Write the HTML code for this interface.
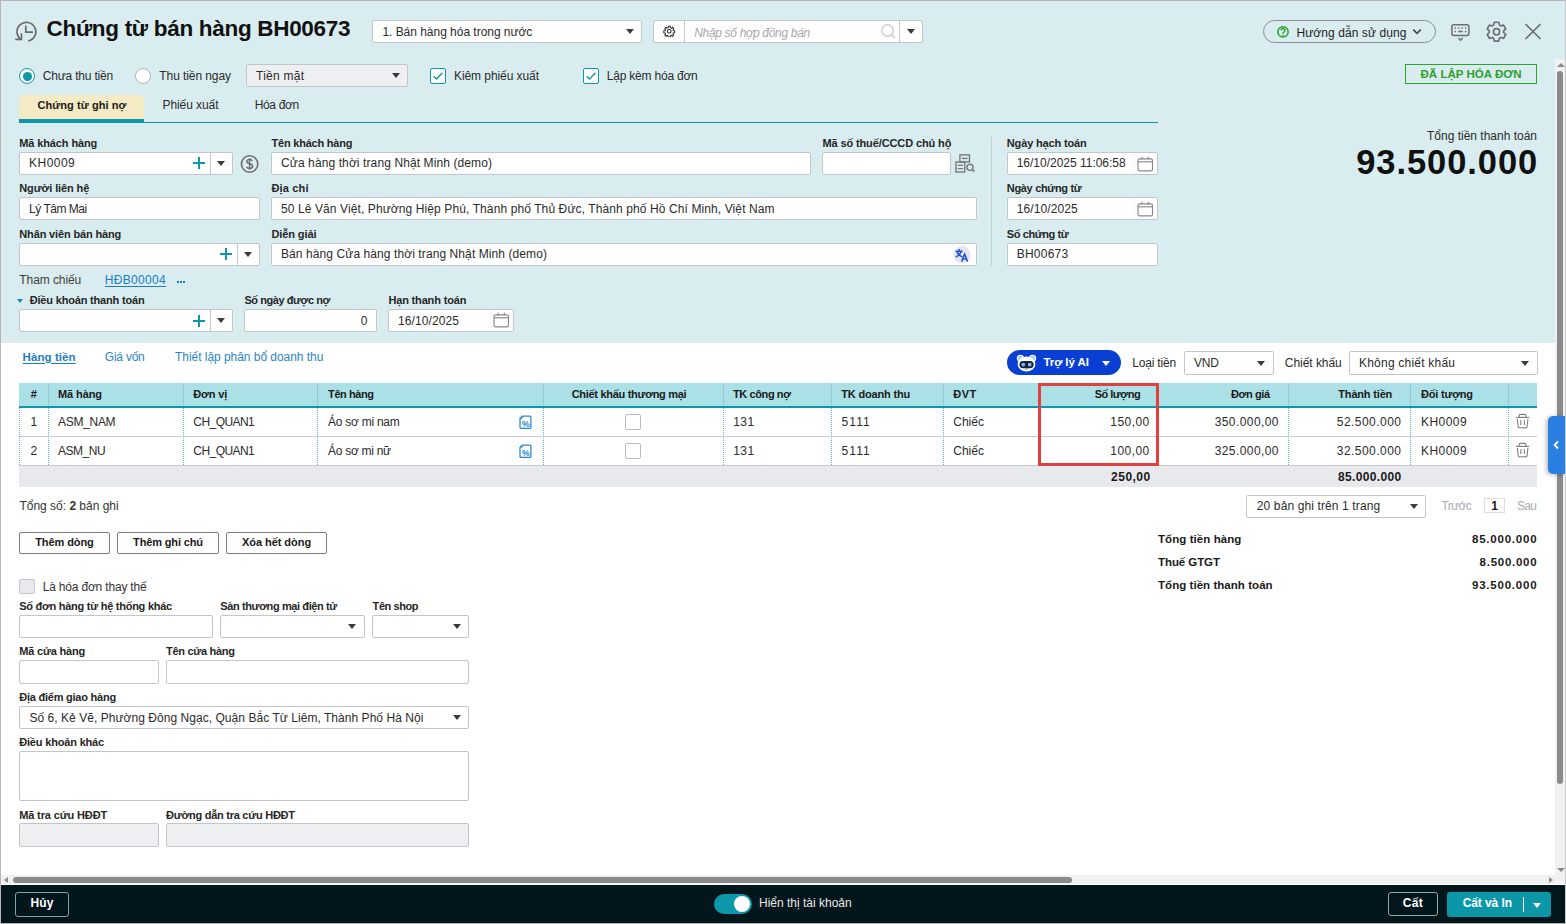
<!DOCTYPE html><html><head><meta charset="utf-8"><style>
html,body{margin:0;padding:0;width:1566px;height:924px;overflow:hidden;background:#fff;position:relative;font-family:"Liberation Sans",sans-serif}
.a{position:absolute}.t{position:absolute;white-space:nowrap;line-height:1}
</style></head><body>
<div class="a" style="left:0.0px;top:0.0px;width:1566.0px;height:343.0px;background:#d9edf0"></div>
<svg class="a" style="left:12px;top:18px" width="30" height="28" viewBox="0 0 30 28">
<path d="M9.5 21.8 A9.4 9.4 0 1 1 16.2 23.0" fill="none" stroke="#6a6a6e" stroke-width="1.7"/>
<path d="M13.8 7.4 V14.2 H21" fill="none" stroke="#6a6a6e" stroke-width="1.7"/>
<path d="M3.2 21.4 H9.4 V15.3" fill="none" stroke="#6a6a6e" stroke-width="1.7"/>
</svg>
<div class="t" style="top:17.5px;font-size:22.5px;color:#111;font-weight:700;letter-spacing:-0.307px;left:46.5px;">Chứng từ bán hàng BH00673</div>
<div class="a" style="left:372.0px;top:20.0px;width:270.0px;height:23.0px;background:#fff;border:1px solid #c2c6cc;border-radius:2px;box-sizing:border-box"></div>
<div class="t" style="top:26.3px;font-size:12px;color:#2b2b2b;letter-spacing:-0.028px;left:382.4px;">1. Bán hàng hóa trong nước</div>
<div style="position:absolute;left:626.0px;top:29.0px;width:0;height:0;border-left:4.5px solid transparent;border-right:4.5px solid transparent;border-top:5px solid #3a3a3a"></div>
<div class="a" style="left:653.0px;top:20.0px;width:270.0px;height:23.0px;background:#fff;border:1px solid #c2c6cc;border-radius:2px;box-sizing:border-box"></div>
<div class="a" style="left:684.0px;top:20.0px;width:1.0px;height:23.0px;background:#c3c7cc"></div>
<div class="a" style="left:899.0px;top:20.0px;width:1.0px;height:23.0px;background:#c3c7cc"></div>
<svg class="a" style="left:663px;top:24.6px" width="12.5" height="12.5" viewBox="0 0 24 24"><path fill="none" stroke="#2a2a2a" stroke-width="2" d="M12 8.5a3.5 3.5 0 1 0 0 7 3.5 3.5 0 0 0 0-7z"/><path fill="none" stroke="#2a2a2a" stroke-width="2" d="M10.3 2.5h3.4l.5 2.6 1.8.8 2.2-1.5 2.4 2.4-1.5 2.2.8 1.8 2.6.5v3.4l-2.6.5-.8 1.8 1.5 2.2-2.4 2.4-2.2-1.5-1.8.8-.5 2.6h-3.4l-.5-2.6-1.8-.8-2.2 1.5-2.4-2.4 1.5-2.2-.8-1.8-2.6-.5v-3.4l2.6-.5.8-1.8-1.5-2.2 2.4-2.4 2.2 1.5 1.8-.8z"/></svg>
<div class="t" style="top:26.9px;font-size:12px;color:#a3a8ae;font-style:italic;letter-spacing:-0.317px;left:694.2px;">Nhập số hợp đồng bán</div>
<svg class="a" style="left:880px;top:23px" width="17" height="17" viewBox="0 0 17 17"><circle cx="7.5" cy="7.5" r="5.8" fill="none" stroke="#c9cdd2" stroke-width="1.4"/><line x1="11.6" y1="11.6" x2="15" y2="15" stroke="#c9cdd2" stroke-width="1.6"/></svg>
<div style="position:absolute;left:906.5px;top:29.0px;width:0;height:0;border-left:4.5px solid transparent;border-right:4.5px solid transparent;border-top:5px solid #3a3a3a"></div>
<div class="a" style="left:1263.0px;top:20.0px;width:173.0px;height:23.0px;border:1px solid #8c8f92;border-radius:12px;box-sizing:border-box"></div>
<svg class="a" style="left:1275.5px;top:25px" width="14" height="14" viewBox="0 0 14 14"><circle cx="7" cy="6.9" r="5.2" fill="none" stroke="#2ea02e" stroke-width="1.5"/><path d="M5.1 5.4a1.9 1.9 0 1 1 2.7 1.7c-.6.3-.8.6-.8 1.2v.4" fill="none" stroke="#2ea02e" stroke-width="1.4"/><circle cx="7" cy="10.3" r=".8" fill="#2ea02e"/></svg>
<div class="t" style="top:26.9px;font-size:12px;color:#1e1e24;letter-spacing:0.083px;left:1296.4px;">Hướng dẫn sử dụng</div>
<svg class="a" style="left:1411.5px;top:28px" width="11" height="8" viewBox="0 0 11 8"><path d="M1.2 1.6 L5.0 5.4 L8.8 1.6" fill="none" stroke="#4a4a4e" stroke-width="1.7"/></svg>
<svg class="a" style="left:1450px;top:23px" width="21" height="19" viewBox="0 0 21 19"><rect x="1.9" y="1.8" width="17" height="10.6" rx="1.8" fill="none" stroke="#6e6e72" stroke-width="1.5"/><g fill="#6e6e72"><rect x="4.4" y="4.3" width="1.5" height="1.5" rx=".4"/><rect x="7.9" y="4.3" width="1.5" height="1.5" rx=".4"/><rect x="11.4" y="4.3" width="1.5" height="1.5" rx=".4"/><rect x="14.9" y="4.3" width="1.5" height="1.5" rx=".4"/><rect x="4.4" y="7.8" width="1.5" height="1.5" rx=".4"/><rect x="8.2" y="7.8" width="4.6" height="1.5" rx=".6"/><rect x="14.9" y="7.8" width="1.5" height="1.5" rx=".4"/></g><path d="M8.4 15.1 L10.5 17.2 L12.6 15.1" fill="none" stroke="#6e6e72" stroke-width="1.4"/></svg>
<svg class="a" style="left:1486px;top:20.8px" width="21" height="22" viewBox="0 0 21 22"><path d="M7.57 4.12 L8.32 1.25 L12.68 1.25 L13.43 4.12 L14.73 4.88 L17.59 4.08 L19.78 7.86 L17.66 9.95 L17.66 11.45 L19.78 13.54 L17.59 17.32 L14.73 16.52 L13.43 17.28 L12.68 20.15 L8.32 20.15 L7.57 17.28 L6.27 16.52 L3.41 17.32 L1.22 13.54 L3.34 11.45 L3.34 9.95 L1.22 7.86 L3.41 4.08 L6.27 4.88 Z" fill="none" stroke="#6e6e72" stroke-width="1.7" stroke-linejoin="round"/><circle cx="10.5" cy="10.7" r="3.1" fill="none" stroke="#6e6e72" stroke-width="1.7"/></svg>
<svg class="a" style="left:1523.6px;top:23px" width="18" height="17" viewBox="0 0 18 17"><path d="M1.5 1 L16.5 16 M16.5 1 L1.5 16" stroke="#6e6e72" stroke-width="1.7"/></svg>
<div class="a" style="left:19.0px;top:68.0px;width:16.0px;height:16.0px;border:1.5px solid #0e97a8;border-radius:50%;background:#fff;box-sizing:border-box"></div>
<div class="a" style="left:22.5px;top:71.5px;width:9.0px;height:9.0px;border-radius:50%;background:#0e97a8"></div>
<div class="t" style="top:70.3px;font-size:12px;color:#2b2b2b;letter-spacing:-0.188px;left:42.7px;">Chưa thu tiền</div>
<div class="a" style="left:135.0px;top:68.0px;width:16.0px;height:16.0px;border:1px solid #b3b3b3;border-radius:50%;background:#fff;box-sizing:border-box"></div>
<div class="t" style="top:70.3px;font-size:12px;color:#2b2b2b;letter-spacing:-0.085px;left:159.3px;">Thu tiền ngay</div>
<div class="a" style="left:246.0px;top:64.0px;width:162.0px;height:23.0px;background:#eeeff1;border:1px solid #c2c6cc;border-radius:2px;box-sizing:border-box"></div>
<div class="t" style="top:70.3px;font-size:12px;color:#2b2b2b;letter-spacing:0.250px;left:256.0px;">Tiền mặt</div>
<div style="position:absolute;left:391.5px;top:72.5px;width:0;height:0;border-left:4.5px solid transparent;border-right:4.5px solid transparent;border-top:5px solid #3a3a3a"></div>
<div class="a" style="left:430.0px;top:68.0px;width:16.0px;height:16.0px;border:1.5px solid #0e97a8;border-radius:2px;background:#fff;box-sizing:border-box"></div>
<svg class="a" style="left:430px;top:68px" width="16" height="16" viewBox="0 0 16 16"><path d="M3.6 8.2 L6.6 11 L12.4 4.8" fill="none" stroke="#0e97a8" stroke-width="1.4"/></svg>
<div class="t" style="top:70.3px;font-size:12px;color:#2b2b2b;letter-spacing:-0.076px;left:454.0px;">Kiêm phiếu xuất</div>
<div class="a" style="left:583.0px;top:68.0px;width:16.0px;height:16.0px;border:1.5px solid #0e97a8;border-radius:2px;background:#fff;box-sizing:border-box"></div>
<svg class="a" style="left:583px;top:68px" width="16" height="16" viewBox="0 0 16 16"><path d="M3.6 8.2 L6.6 11 L12.4 4.8" fill="none" stroke="#0e97a8" stroke-width="1.4"/></svg>
<div class="t" style="top:70.3px;font-size:12px;color:#2b2b2b;letter-spacing:-0.210px;left:606.8px;">Lập kèm hóa đơn</div>
<div class="a" style="left:1405.0px;top:64.0px;width:132.0px;height:20.0px;border:1.6px solid #2ba52b;box-sizing:border-box"></div>
<div class="t" style="top:69.0px;font-size:11.5px;color:#2ba02b;font-weight:700;letter-spacing:0.035px;left:1171.0px;width:600px;text-align:center;">ĐÃ LẬP HÓA ĐƠN</div>
<div class="a" style="left:19.0px;top:95.0px;width:125.0px;height:24.0px;background:#f4eac3;border-radius:5px 5px 0 0"></div>
<div class="a" style="left:19.0px;top:119.0px;width:125.0px;height:4.0px;background:#0e97a8"></div>
<div class="a" style="left:144.0px;top:122.0px;width:1013.5px;height:1.0px;background:#0e97a8"></div>
<div class="t" style="top:99.9px;font-size:11px;color:#1a1a1a;font-weight:700;letter-spacing:0.078px;left:37.4px;">Chứng từ ghi nợ</div>
<div class="t" style="top:99.1px;font-size:12px;color:#2b2b2b;letter-spacing:-0.080px;left:162.5px;">Phiếu xuất</div>
<div class="t" style="top:99.1px;font-size:12px;color:#2b2b2b;letter-spacing:-0.346px;left:254.7px;">Hóa đơn</div>
<div class="t" style="top:138.4px;font-size:11px;color:#262626;font-weight:700;letter-spacing:-0.122px;left:19.3px;">Mã khách hàng</div>
<div class="t" style="top:138.4px;font-size:11px;color:#262626;font-weight:700;letter-spacing:-0.212px;left:271.5px;">Tên khách hàng</div>
<div class="t" style="top:138.4px;font-size:11px;color:#262626;font-weight:700;letter-spacing:-0.114px;left:822.4px;">Mã số thuế/CCCD chủ hộ</div>
<div class="t" style="top:138.4px;font-size:11px;color:#262626;font-weight:700;letter-spacing:-0.147px;left:1006.8px;">Ngày hạch toán</div>
<div class="t" style="top:182.9px;font-size:11px;color:#262626;font-weight:700;letter-spacing:-0.117px;left:19.3px;">Người liên hệ</div>
<div class="t" style="top:182.9px;font-size:11px;color:#262626;font-weight:700;letter-spacing:0.154px;left:271.5px;">Địa chỉ</div>
<div class="t" style="top:182.9px;font-size:11px;color:#262626;font-weight:700;letter-spacing:-0.324px;left:1006.8px;">Ngày chứng từ</div>
<div class="t" style="top:229.1px;font-size:11px;color:#262626;font-weight:700;letter-spacing:-0.148px;left:19.3px;">Nhân viên bán hàng</div>
<div class="t" style="top:229.1px;font-size:11px;color:#262626;font-weight:700;letter-spacing:-0.105px;left:271.5px;">Diễn giải</div>
<div class="t" style="top:229.1px;font-size:11px;color:#262626;font-weight:700;letter-spacing:-0.405px;left:1006.8px;">Số chứng từ</div>
<div class="a" style="left:19.0px;top:152.0px;width:214.0px;height:23.0px;background:#fff;border:1px solid #c2c6cc;border-radius:2px;box-sizing:border-box"></div>
<div class="a" style="left:210.0px;top:152.0px;width:1.0px;height:23.0px;background:#c3c7cc"></div>
<div class="a" style="left:193.0px;top:162.3px;width:12.0px;height:2.0px;background:#0e97a8"></div>
<div class="a" style="left:198.0px;top:157.3px;width:2.0px;height:12.0px;background:#0e97a8"></div>
<div style="position:absolute;left:217.0px;top:161.0px;width:0;height:0;border-left:4.5px solid transparent;border-right:4.5px solid transparent;border-top:5px solid #3a3a3a"></div>
<div class="t" style="top:157.0px;font-size:12px;color:#2b2b2b;letter-spacing:0.445px;left:29.1px;">KH0009</div>
<svg class="a" style="left:240px;top:153.5px" width="19" height="20" viewBox="0 0 19 20"><circle cx="9.6" cy="10" r="8.2" fill="none" stroke="#6e6e72" stroke-width="1.6"/><path d="M12.4 6.9 C11.8 5.9 10.8 5.5 9.6 5.5 C7.9 5.5 6.8 6.4 6.8 7.6 C6.8 10.3 12.6 9.3 12.6 12.2 C12.6 13.5 11.4 14.4 9.6 14.4 C8.3 14.4 7.2 13.9 6.5 13" fill="none" stroke="#6e6e72" stroke-width="1.5"/><path d="M9.6 4.2 V15.8" stroke="#6e6e72" stroke-width="1.3"/></svg>
<div class="a" style="left:271.0px;top:152.0px;width:540.0px;height:23.0px;background:#fff;border:1px solid #c2c6cc;border-radius:2px;box-sizing:border-box"></div>
<div class="t" style="top:157.0px;font-size:12px;color:#2b2b2b;letter-spacing:0.104px;left:281.0px;">Cửa hàng thời trang Nhật Minh (demo)</div>
<div class="a" style="left:822.0px;top:152.0px;width:129.0px;height:23.0px;background:#fff;border:1px solid #c2c6cc;border-radius:2px;box-sizing:border-box"></div>
<svg class="a" style="left:955px;top:153px" width="21" height="21" viewBox="0 0 21 21"><g fill="none" stroke="#75797e" stroke-width="1.4"><rect x="4.9" y="1.9" width="9.6" height="7"/><path d="M6.8 5.4 H12.6"/><rect x="0.9" y="9" width="8.8" height="10"/><path d="M2.6 12.4 H8 M2.6 15.6 H8"/><circle cx="15" cy="14.3" r="3.1"/><path d="M17.2 16.5 L19.4 18.7" stroke-width="1.7"/></g></svg>
<div class="a" style="left:991.4px;top:137.0px;width:1.0px;height:129.0px;background:#c0d0d4"></div>
<div class="a" style="left:1007.0px;top:152.0px;width:151.0px;height:23.0px;background:#fff;border:1px solid #c2c6cc;border-radius:2px;box-sizing:border-box"></div>
<div class="a" style="left:1134.0px;top:153.3px;width:1.0px;height:20.2px;background:#f6f7f8"></div>
<svg style="position:absolute;left:1137px;top:155.5px" width="17" height="17" viewBox="0 0 17 17"><rect x="1" y="2.9" width="14.5" height="12" rx="1.7" fill="none" stroke="#85898f" stroke-width="1.15"/><line x1="1" y1="5.8" x2="15.5" y2="5.8" stroke="#85898f" stroke-width="1.15"/><line x1="5" y1="0.8" x2="5" y2="3.6" stroke="#85898f" stroke-width="1.1"/><line x1="11.3" y1="0.8" x2="11.3" y2="3.6" stroke="#85898f" stroke-width="1.1"/></svg>
<div class="t" style="top:157.0px;font-size:12px;color:#2b2b2b;letter-spacing:-0.012px;left:1016.7px;">16/10/2025 11:06:58</div>
<div class="a" style="left:1007.0px;top:197.0px;width:151.0px;height:23.0px;background:#fff;border:1px solid #c2c6cc;border-radius:2px;box-sizing:border-box"></div>
<div class="a" style="left:1134.0px;top:198.3px;width:1.0px;height:20.2px;background:#f6f7f8"></div>
<svg style="position:absolute;left:1137px;top:200.5px" width="17" height="17" viewBox="0 0 17 17"><rect x="1" y="2.9" width="14.5" height="12" rx="1.7" fill="none" stroke="#85898f" stroke-width="1.15"/><line x1="1" y1="5.8" x2="15.5" y2="5.8" stroke="#85898f" stroke-width="1.15"/><line x1="5" y1="0.8" x2="5" y2="3.6" stroke="#85898f" stroke-width="1.1"/><line x1="11.3" y1="0.8" x2="11.3" y2="3.6" stroke="#85898f" stroke-width="1.1"/></svg>
<div class="t" style="top:203.3px;font-size:12px;color:#2b2b2b;letter-spacing:0.104px;left:1016.7px;">16/10/2025</div>
<div class="a" style="left:19.0px;top:197.0px;width:241.0px;height:23.0px;background:#fff;border:1px solid #c2c6cc;border-radius:2px;box-sizing:border-box"></div>
<div class="t" style="top:203.3px;font-size:12px;color:#2b2b2b;letter-spacing:-0.497px;left:29.1px;">Lý Tâm Mai</div>
<div class="a" style="left:271.0px;top:197.0px;width:706.0px;height:23.0px;background:#fff;border:1px solid #c2c6cc;border-radius:2px;box-sizing:border-box"></div>
<div class="t" style="top:203.3px;font-size:12px;color:#2b2b2b;letter-spacing:0.103px;left:281.0px;">50 Lê Văn Việt, Phường Hiệp Phú, Thành phố Thủ Đức, Thành phố Hồ Chí Minh, Việt Nam</div>
<div class="a" style="left:19.0px;top:243.0px;width:241.0px;height:23.0px;background:#fff;border:1px solid #c2c6cc;border-radius:2px;box-sizing:border-box"></div>
<div class="a" style="left:237.0px;top:243.0px;width:1.0px;height:23.0px;background:#c3c7cc"></div>
<div class="a" style="left:220.0px;top:252.8px;width:12.0px;height:2.0px;background:#0e97a8"></div>
<div class="a" style="left:225.0px;top:247.8px;width:2.0px;height:12.0px;background:#0e97a8"></div>
<div style="position:absolute;left:244.0px;top:251.5px;width:0;height:0;border-left:4.5px solid transparent;border-right:4.5px solid transparent;border-top:5px solid #3a3a3a"></div>
<div class="a" style="left:271.0px;top:243.0px;width:706.0px;height:23.0px;background:#fff;border:1px solid #c2c6cc;border-radius:2px;box-sizing:border-box"></div>
<div class="t" style="top:247.8px;font-size:12px;color:#2b2b2b;letter-spacing:0.089px;left:281.0px;">Bán hàng Cửa hàng thời trang Nhật Minh (demo)</div>
<svg class="a" style="left:953px;top:246px" width="18" height="18" viewBox="0 0 18 18"><circle cx="9" cy="8.6" r="8.6" fill="#e4e8ee"/><g fill="none" stroke="#1d4fd6" stroke-width="1.5"><path d="M2.6 5.2 H9.6 M6.1 3 V5.2"/><path d="M3.8 5.6 Q5.6 9.6 9.4 11"/><path d="M8.2 5.6 Q6.8 9.4 2.8 11"/><path d="M8.6 15.6 L11.6 8 L14.6 15.6 M9.7 12.9 H13.5"/></g></svg>
<div class="a" style="left:1007.0px;top:243.0px;width:151.0px;height:23.0px;background:#fff;border:1px solid #c2c6cc;border-radius:2px;box-sizing:border-box"></div>
<div class="t" style="top:247.8px;font-size:12px;color:#2b2b2b;letter-spacing:0.242px;left:1016.7px;">BH00673</div>
<div class="t" style="top:274.1px;font-size:12px;color:#3c3c3c;letter-spacing:-0.078px;left:19.3px;">Tham chiếu</div>
<div class="t" style="top:274.1px;font-size:12px;color:#1b7dc4;letter-spacing:0.326px;left:104.8px;text-decoration:underline;text-underline-offset:1.5px">HĐB00004</div>
<div class="a" style="left:177.3px;top:281.3px;width:1.8px;height:1.8px;background:#1b7dc4"></div>
<div class="a" style="left:180.2px;top:281.3px;width:1.8px;height:1.8px;background:#1b7dc4"></div>
<div class="a" style="left:183.1px;top:281.3px;width:1.8px;height:1.8px;background:#1b7dc4"></div>
<div style="position:absolute;left:17.1px;top:299.0px;width:0;height:0;border-left:3.5px solid transparent;border-right:3.5px solid transparent;border-top:4px solid #1b7dc4"></div>
<div class="t" style="top:294.9px;font-size:11px;color:#262626;font-weight:700;letter-spacing:-0.178px;left:29.7px;">Điều khoản thanh toán</div>
<div class="t" style="top:294.9px;font-size:11px;color:#262626;font-weight:700;letter-spacing:-0.433px;left:244.4px;">Số ngày được nợ</div>
<div class="t" style="top:294.9px;font-size:11px;color:#262626;font-weight:700;letter-spacing:-0.159px;left:388.4px;">Hạn thanh toán</div>
<div class="a" style="left:19.0px;top:309.0px;width:214.0px;height:23.0px;background:#fff;border:1px solid #c2c6cc;border-radius:2px;box-sizing:border-box"></div>
<div class="a" style="left:210.0px;top:309.0px;width:1.0px;height:23.0px;background:#c3c7cc"></div>
<div class="a" style="left:193.0px;top:319.5px;width:12.0px;height:2.0px;background:#0e97a8"></div>
<div class="a" style="left:198.0px;top:314.5px;width:2.0px;height:12.0px;background:#0e97a8"></div>
<div style="position:absolute;left:217.0px;top:318.3px;width:0;height:0;border-left:4.5px solid transparent;border-right:4.5px solid transparent;border-top:5px solid #3a3a3a"></div>
<div class="a" style="left:244.0px;top:309.0px;width:133.0px;height:23.0px;background:#fff;border:1px solid #c2c6cc;border-radius:2px;box-sizing:border-box"></div>
<div class="t" style="top:314.8px;font-size:12px;color:#2b2b2b;right:1198.7px;">0</div>
<div class="a" style="left:388.0px;top:309.0px;width:126.0px;height:23.0px;background:#fff;border:1px solid #c2c6cc;border-radius:2px;box-sizing:border-box"></div>
<div class="a" style="left:490.0px;top:310.3px;width:1.0px;height:20.2px;background:#f6f7f8"></div>
<svg style="position:absolute;left:492.5px;top:312.4px" width="17" height="17" viewBox="0 0 17 17"><rect x="1" y="2.9" width="14.5" height="12" rx="1.7" fill="none" stroke="#85898f" stroke-width="1.15"/><line x1="1" y1="5.8" x2="15.5" y2="5.8" stroke="#85898f" stroke-width="1.15"/><line x1="5" y1="0.8" x2="5" y2="3.6" stroke="#85898f" stroke-width="1.1"/><line x1="11.3" y1="0.8" x2="11.3" y2="3.6" stroke="#85898f" stroke-width="1.1"/></svg>
<div class="t" style="top:314.8px;font-size:12px;color:#2b2b2b;letter-spacing:0.104px;left:398.0px;">16/10/2025</div>
<div class="t" style="top:130.1px;font-size:12px;color:#2a2a2a;letter-spacing:-0.005px;right:29.0px;margin-right:0.005px;">Tổng tiền thanh toán</div>
<div class="t" style="top:144.7px;font-size:34.5px;color:#111;font-weight:700;letter-spacing:0.925px;right:28.8px;margin-right:-0.925px;">93.500.000</div>
<div class="t" style="top:351.6px;font-size:11.5px;color:#1b7dc4;font-weight:700;letter-spacing:0.076px;left:22.6px;text-decoration:underline;text-underline-offset:1.5px">Hàng tiền</div>
<div class="t" style="top:351.1px;font-size:12px;color:#2b86c8;letter-spacing:-0.227px;left:104.8px;">Giá vốn</div>
<div class="t" style="top:351.1px;font-size:12px;color:#2b86c8;letter-spacing:-0.041px;left:175.0px;">Thiết lập phân bổ doanh thu</div>
<div class="a" style="left:1007.0px;top:350.0px;width:114.0px;height:25.0px;background:#0a3fd4;border-radius:13px"></div>
<svg class="a" style="left:1016px;top:352px" width="21" height="21" viewBox="0 0 21 21"><circle cx="4.4" cy="6.3" r="3.1" fill="#9fd0f7" stroke="#fff" stroke-width="1.1"/><circle cx="16.6" cy="6.3" r="3.1" fill="#9fd0f7" stroke="#fff" stroke-width="1.1"/><ellipse cx="10.5" cy="12" rx="8.9" ry="7.4" fill="#fff"/><rect x="3.4" y="9" width="14.2" height="7.2" rx="3.6" fill="#16213a"/><circle cx="7.3" cy="12.6" r="1.9" fill="#79bdf2"/><circle cx="13.7" cy="12.6" r="1.9" fill="#79bdf2"/><rect x="9.3" y="16.2" width="2.4" height="1.5" fill="#8a8f98"/></svg>
<div class="t" style="top:356.8px;font-size:11.5px;color:#fff;font-weight:700;letter-spacing:-0.064px;left:1043.4px;">Trợ lý AI</div>
<div style="position:absolute;left:1101.5px;top:360.8px;width:0;height:0;border-left:4.0px solid transparent;border-right:4.0px solid transparent;border-top:5px solid #fff"></div>
<div class="t" style="top:357.3px;font-size:12px;color:#2a2a2a;letter-spacing:-0.172px;left:1132.2px;">Loại tiền</div>
<div class="a" style="left:1184.0px;top:351.0px;width:90.0px;height:24.0px;background:#fff;border:1px solid #c2c6cc;border-radius:2px;box-sizing:border-box"></div>
<div class="t" style="top:357.3px;font-size:12px;color:#2b2b2b;letter-spacing:-0.172px;left:1194.0px;">VND</div>
<div style="position:absolute;left:1257.0px;top:360.5px;width:0;height:0;border-left:4.5px solid transparent;border-right:4.5px solid transparent;border-top:5px solid #3a3a3a"></div>
<div class="t" style="top:357.3px;font-size:12px;color:#2a2a2a;letter-spacing:-0.042px;left:1284.8px;">Chiết khấu</div>
<div class="a" style="left:1349.0px;top:351.0px;width:189.0px;height:24.0px;background:#fff;border:1px solid #c2c6cc;border-radius:2px;box-sizing:border-box"></div>
<div class="t" style="top:357.3px;font-size:12px;color:#2b2b2b;letter-spacing:0.217px;left:1359.0px;">Không chiết khấu</div>
<div style="position:absolute;left:1521.0px;top:360.5px;width:0;height:0;border-left:4.5px solid transparent;border-right:4.5px solid transparent;border-top:5px solid #3a3a3a"></div>
<div class="a" style="left:19.0px;top:383.0px;width:1518.0px;height:24.0px;background:#abe1e6"></div>
<div class="a" style="left:19.0px;top:406.0px;width:1518.0px;height:2.0px;background:#0e97a8"></div>
<div class="a" style="left:19.0px;top:408.0px;width:1518.0px;height:57.0px;background:#fff"></div>
<div class="a" style="left:19.0px;top:436.0px;width:1518.0px;height:1.0px;background:#c8cacc"></div>
<div class="a" style="left:19.0px;top:465.0px;width:1518.0px;height:1.0px;background:#c8cbce"></div>
<div class="a" style="left:19.0px;top:466.0px;width:1518.0px;height:21.0px;background:#e8e9ed"></div>
<div class="a" style="left:19.0px;top:408.0px;width:0.0px;height:57.0px;border-left:1px dotted #5fb8c4"></div>
<div class="a" style="left:48.0px;top:383.0px;width:1.0px;height:23.0px;background:#8fcdd3"></div>
<div class="a" style="left:48.0px;top:408.0px;width:0.0px;height:57.0px;border-left:1px dotted #5fb8c4"></div>
<div class="a" style="left:183.0px;top:383.0px;width:1.0px;height:23.0px;background:#8fcdd3"></div>
<div class="a" style="left:183.0px;top:408.0px;width:0.0px;height:57.0px;border-left:1px dotted #5fb8c4"></div>
<div class="a" style="left:317.0px;top:383.0px;width:1.0px;height:23.0px;background:#8fcdd3"></div>
<div class="a" style="left:317.0px;top:408.0px;width:0.0px;height:57.0px;border-left:1px dotted #5fb8c4"></div>
<div class="a" style="left:543.0px;top:383.0px;width:1.0px;height:23.0px;background:#8fcdd3"></div>
<div class="a" style="left:543.0px;top:408.0px;width:0.0px;height:57.0px;border-left:1px dotted #5fb8c4"></div>
<div class="a" style="left:723.0px;top:383.0px;width:1.0px;height:23.0px;background:#8fcdd3"></div>
<div class="a" style="left:723.0px;top:408.0px;width:0.0px;height:57.0px;border-left:1px dotted #5fb8c4"></div>
<div class="a" style="left:831.0px;top:383.0px;width:1.0px;height:23.0px;background:#8fcdd3"></div>
<div class="a" style="left:831.0px;top:408.0px;width:0.0px;height:57.0px;border-left:1px dotted #5fb8c4"></div>
<div class="a" style="left:943.0px;top:383.0px;width:1.0px;height:23.0px;background:#8fcdd3"></div>
<div class="a" style="left:943.0px;top:408.0px;width:0.0px;height:57.0px;border-left:1px dotted #5fb8c4"></div>
<div class="a" style="left:1038.0px;top:383.0px;width:1.0px;height:23.0px;background:#8fcdd3"></div>
<div class="a" style="left:1038.0px;top:408.0px;width:0.0px;height:57.0px;border-left:1px dotted #5fb8c4"></div>
<div class="a" style="left:1158.0px;top:383.0px;width:1.0px;height:23.0px;background:#8fcdd3"></div>
<div class="a" style="left:1158.0px;top:408.0px;width:0.0px;height:57.0px;border-left:1px dotted #5fb8c4"></div>
<div class="a" style="left:1288.0px;top:383.0px;width:1.0px;height:23.0px;background:#8fcdd3"></div>
<div class="a" style="left:1288.0px;top:408.0px;width:0.0px;height:57.0px;border-left:1px dotted #5fb8c4"></div>
<div class="a" style="left:1410.0px;top:383.0px;width:1.0px;height:23.0px;background:#8fcdd3"></div>
<div class="a" style="left:1410.0px;top:408.0px;width:0.0px;height:57.0px;border-left:1px dotted #5fb8c4"></div>
<div class="a" style="left:1508.0px;top:383.0px;width:1.0px;height:23.0px;background:#8fcdd3"></div>
<div class="a" style="left:1508.0px;top:408.0px;width:0.0px;height:57.0px;border-left:1px dotted #5fb8c4"></div>
<div class="t" style="top:389.4px;font-size:11px;color:#1a1a1a;font-weight:700;left:-266.2px;width:600px;text-align:center;">#</div>
<div class="t" style="top:389.4px;font-size:11px;color:#1a1a1a;font-weight:700;letter-spacing:-0.104px;left:58.0px;">Mã hàng</div>
<div class="t" style="top:389.4px;font-size:11px;color:#1a1a1a;font-weight:700;letter-spacing:-0.144px;left:193.3px;">Đơn vị</div>
<div class="t" style="top:389.4px;font-size:11px;color:#1a1a1a;font-weight:700;letter-spacing:-0.413px;left:328.1px;">Tên hàng</div>
<div class="t" style="top:389.4px;font-size:11px;color:#1a1a1a;font-weight:700;letter-spacing:-0.295px;left:329.0px;width:600px;text-align:center;">Chiết khấu thương mại</div>
<div class="t" style="top:389.4px;font-size:11px;color:#1a1a1a;font-weight:700;letter-spacing:-0.399px;left:733.0px;">TK công nợ</div>
<div class="t" style="top:389.4px;font-size:11px;color:#1a1a1a;font-weight:700;letter-spacing:-0.170px;left:841.3px;">TK doanh thu</div>
<div class="t" style="top:389.4px;font-size:11px;color:#1a1a1a;font-weight:700;letter-spacing:0.500px;left:953.3px;">ĐVT</div>
<div class="t" style="top:389.4px;font-size:11px;color:#1a1a1a;font-weight:700;letter-spacing:-0.487px;right:425.4px;margin-right:0.487px;">Số lượng</div>
<div class="t" style="top:389.4px;font-size:11px;color:#1a1a1a;font-weight:700;letter-spacing:-0.406px;right:296.0px;margin-right:0.406px;">Đơn giá</div>
<div class="t" style="top:389.4px;font-size:11px;color:#1a1a1a;font-weight:700;letter-spacing:-0.179px;right:173.7px;margin-right:0.179px;">Thành tiền</div>
<div class="t" style="top:389.4px;font-size:11px;color:#1a1a1a;font-weight:700;letter-spacing:-0.209px;left:1421.0px;">Đối tượng</div>
<div class="t" style="top:416.1px;font-size:12px;color:#2b2b2b;left:-266.2px;width:600px;text-align:center;">1</div>
<div class="t" style="top:416.1px;font-size:12px;color:#2b2b2b;letter-spacing:-0.291px;left:58.0px;">ASM_NAM</div>
<div class="t" style="top:416.1px;font-size:12px;color:#2b2b2b;letter-spacing:-0.551px;left:193.3px;">CH_QUAN1</div>
<div class="t" style="top:416.1px;font-size:12px;color:#2b2b2b;letter-spacing:-0.269px;left:328.1px;">Áo sơ mi nam</div>
<svg class="a" style="left:518.5px;top:415.3px" width="13" height="14" viewBox="0 0 13 14"><path d="M3.4 1 H10.9 A1 1 0 0 1 11.9 2 V12.4 A1 1 0 0 1 10.9 13.4 H2 A1 1 0 0 1 1 12.4 V3.4 Z" fill="#fff" stroke="#2a86cf" stroke-width="1.25"/><ellipse cx="2.6" cy="2.6" rx="1.3" ry="0.9" transform="rotate(-40 2.6 2.6)" fill="none" stroke="#2a86cf" stroke-width="0.8"/><text x="6.9" y="11.6" text-anchor="middle" font-family="Liberation Sans" font-weight="700" font-size="8.6" fill="#2a86cf">%</text></svg>
<div class="a" style="left:625.0px;top:414.3px;width:16.0px;height:16.0px;border:1px solid #b9bcc0;border-radius:2px;background:#fff;box-sizing:border-box"></div>
<div class="t" style="top:416.1px;font-size:12px;color:#2b2b2b;letter-spacing:0.484px;left:733.2px;">131</div>
<div class="t" style="top:416.1px;font-size:12px;color:#2b2b2b;letter-spacing:1.093px;left:841.5px;">5111</div>
<div class="t" style="top:416.1px;font-size:12px;color:#2b2b2b;letter-spacing:-0.022px;left:953.3px;">Chiếc</div>
<div class="t" style="top:416.1px;font-size:12px;color:#2b2b2b;letter-spacing:0.459px;right:416.7px;margin-right:-0.459px;">150,00</div>
<div class="t" style="top:416.1px;font-size:12px;color:#2b2b2b;letter-spacing:0.415px;right:287.5px;margin-right:-0.415px;">350.000,00</div>
<div class="t" style="top:416.1px;font-size:12px;color:#2b2b2b;letter-spacing:0.460px;right:165.0px;margin-right:-0.460px;">52.500.000</div>
<div class="t" style="top:416.1px;font-size:12px;color:#2b2b2b;letter-spacing:0.445px;left:1421.0px;">KH0009</div>
<svg class="a" style="left:1515px;top:413px" width="16" height="16" viewBox="0 0 16 16"><g fill="none" stroke="#7f8286" stroke-width="1.15"><path d="M1 4.4 H14.2"/><path d="M4.2 4.2 V2.5 A1.2 1.2 0 0 1 5.4 1.3 H9.8 A1.2 1.2 0 0 1 11 2.5 V4.2"/><path d="M2.3 6 L3.2 14 A0.9 0.9 0 0 0 4.1 14.8 H11.1 A0.9 0.9 0 0 0 12 14 L12.9 6"/><path d="M5.8 7.2 V12 M9.4 7.2 V12"/></g></svg>
<div class="t" style="top:445.3px;font-size:12px;color:#2b2b2b;left:-266.2px;width:600px;text-align:center;">2</div>
<div class="t" style="top:445.3px;font-size:12px;color:#2b2b2b;letter-spacing:-0.483px;left:58.0px;">ASM_NU</div>
<div class="t" style="top:445.3px;font-size:12px;color:#2b2b2b;letter-spacing:-0.551px;left:193.3px;">CH_QUAN1</div>
<div class="t" style="top:445.3px;font-size:12px;color:#2b2b2b;letter-spacing:-0.292px;left:328.1px;">Áo sơ mi nữ</div>
<svg class="a" style="left:518.5px;top:444.3px" width="13" height="14" viewBox="0 0 13 14"><path d="M3.4 1 H10.9 A1 1 0 0 1 11.9 2 V12.4 A1 1 0 0 1 10.9 13.4 H2 A1 1 0 0 1 1 12.4 V3.4 Z" fill="#fff" stroke="#2a86cf" stroke-width="1.25"/><ellipse cx="2.6" cy="2.6" rx="1.3" ry="0.9" transform="rotate(-40 2.6 2.6)" fill="none" stroke="#2a86cf" stroke-width="0.8"/><text x="6.9" y="11.6" text-anchor="middle" font-family="Liberation Sans" font-weight="700" font-size="8.6" fill="#2a86cf">%</text></svg>
<div class="a" style="left:625.0px;top:443.3px;width:16.0px;height:16.0px;border:1px solid #b9bcc0;border-radius:2px;background:#fff;box-sizing:border-box"></div>
<div class="t" style="top:445.3px;font-size:12px;color:#2b2b2b;letter-spacing:0.484px;left:733.2px;">131</div>
<div class="t" style="top:445.3px;font-size:12px;color:#2b2b2b;letter-spacing:1.093px;left:841.5px;">5111</div>
<div class="t" style="top:445.3px;font-size:12px;color:#2b2b2b;letter-spacing:-0.022px;left:953.3px;">Chiếc</div>
<div class="t" style="top:445.3px;font-size:12px;color:#2b2b2b;letter-spacing:0.459px;right:416.7px;margin-right:-0.459px;">100,00</div>
<div class="t" style="top:445.3px;font-size:12px;color:#2b2b2b;letter-spacing:0.415px;right:287.5px;margin-right:-0.415px;">325.000,00</div>
<div class="t" style="top:445.3px;font-size:12px;color:#2b2b2b;letter-spacing:0.460px;right:165.0px;margin-right:-0.460px;">32.500.000</div>
<div class="t" style="top:445.3px;font-size:12px;color:#2b2b2b;letter-spacing:0.445px;left:1421.0px;">KH0009</div>
<svg class="a" style="left:1515px;top:442px" width="16" height="16" viewBox="0 0 16 16"><g fill="none" stroke="#7f8286" stroke-width="1.15"><path d="M1 4.4 H14.2"/><path d="M4.2 4.2 V2.5 A1.2 1.2 0 0 1 5.4 1.3 H9.8 A1.2 1.2 0 0 1 11 2.5 V4.2"/><path d="M2.3 6 L3.2 14 A0.9 0.9 0 0 0 4.1 14.8 H11.1 A0.9 0.9 0 0 0 12 14 L12.9 6"/><path d="M5.8 7.2 V12 M9.4 7.2 V12"/></g></svg>
<div class="t" style="top:470.9px;font-size:12px;color:#1a1a1a;font-weight:700;letter-spacing:0.479px;right:415.8px;margin-right:-0.479px;">250,00</div>
<div class="t" style="top:470.9px;font-size:12px;color:#1a1a1a;font-weight:700;letter-spacing:0.360px;right:164.7px;margin-right:-0.360px;">85.000.000</div>
<div class="a" style="left:1038.4px;top:383.4px;width:121.0px;height:83.0px;border:3px solid #e0413f;box-sizing:border-box"></div>
<div class="t" style="top:500.1px;font-size:12px;color:#333;letter-spacing:-0.018px;left:19.5px;">Tổng số: <b>2</b> bản ghi</div>
<div class="a" style="left:1246.0px;top:495.0px;width:180.0px;height:23.0px;background:#fff;border:1px solid #c2c6cc;border-radius:2px;box-sizing:border-box"></div>
<div class="t" style="top:499.8px;font-size:12px;color:#2b2b2b;letter-spacing:0.120px;left:1256.8px;">20 bản ghi trên 1 trang</div>
<div style="position:absolute;left:1409.5px;top:504.0px;width:0;height:0;border-left:4.5px solid transparent;border-right:4.5px solid transparent;border-top:5px solid #3a3a3a"></div>
<div class="t" style="top:499.8px;font-size:12px;color:#a9adb2;letter-spacing:-0.599px;left:1441.4px;">Trước</div>
<div class="a" style="left:1484.3px;top:498.3px;width:20.4px;height:15.2px;border:1px solid #dcdee0;box-sizing:border-box;background:#fff"></div>
<div class="t" style="top:499.8px;font-size:12px;color:#1a1a1a;font-weight:700;left:1194.5px;width:600px;text-align:center;">1</div>
<div class="t" style="top:499.8px;font-size:12px;color:#a9adb2;letter-spacing:-0.680px;left:1516.9px;">Sau</div>
<div class="a" style="left:19.0px;top:532.3px;width:91.0px;height:21.3px;border:1px solid #7b7f84;border-radius:2px;box-sizing:border-box;background:#fff"></div>
<div class="t" style="top:537.1px;font-size:11px;color:#1a1a1a;font-weight:700;letter-spacing:-0.085px;left:-235.5px;width:600px;text-align:center;">Thêm dòng</div>
<div class="a" style="left:117.0px;top:532.3px;width:102.0px;height:21.3px;border:1px solid #7b7f84;border-radius:2px;box-sizing:border-box;background:#fff"></div>
<div class="t" style="top:537.1px;font-size:11px;color:#1a1a1a;font-weight:700;letter-spacing:-0.136px;left:-132.0px;width:600px;text-align:center;">Thêm ghi chú</div>
<div class="a" style="left:226.0px;top:532.3px;width:101.0px;height:21.3px;border:1px solid #7b7f84;border-radius:2px;box-sizing:border-box;background:#fff"></div>
<div class="t" style="top:537.1px;font-size:11px;color:#1a1a1a;font-weight:700;letter-spacing:-0.043px;left:-23.5px;width:600px;text-align:center;">Xóa hết dòng</div>
<div class="t" style="top:534.1px;font-size:11.5px;color:#1a1a1a;font-weight:700;letter-spacing:0.076px;left:1158.0px;">Tổng tiền hàng</div>
<div class="t" style="top:534.1px;font-size:11.5px;color:#1a1a1a;font-weight:700;letter-spacing:0.782px;right:29.4px;margin-right:-0.782px;">85.000.000</div>
<div class="t" style="top:556.8px;font-size:11.5px;color:#1a1a1a;font-weight:700;letter-spacing:-0.076px;left:1158.0px;">Thuế GTGT</div>
<div class="t" style="top:556.8px;font-size:11.5px;color:#1a1a1a;font-weight:700;letter-spacing:0.729px;right:29.4px;margin-right:-0.729px;">8.500.000</div>
<div class="t" style="top:579.7px;font-size:11.5px;color:#1a1a1a;font-weight:700;letter-spacing:0.047px;left:1158.0px;">Tổng tiền thanh toán</div>
<div class="t" style="top:579.7px;font-size:11.5px;color:#1a1a1a;font-weight:700;letter-spacing:0.782px;right:29.4px;margin-right:-0.782px;">93.500.000</div>
<div class="a" style="left:19.0px;top:579.3px;width:15.7px;height:15.2px;border:1px solid #c3c6ca;border-radius:2px;box-sizing:border-box;background:#e8e9ed"></div>
<div class="t" style="top:581.2px;font-size:12px;color:#333;letter-spacing:-0.183px;left:42.7px;">Là hóa đơn thay thế</div>
<div class="t" style="top:601.2px;font-size:11px;color:#262626;font-weight:700;letter-spacing:-0.260px;left:19.2px;">Số đơn hàng từ hệ thống khác</div>
<div class="t" style="top:601.2px;font-size:11px;color:#262626;font-weight:700;letter-spacing:-0.391px;left:220.3px;">Sàn thương mại điện tử</div>
<div class="t" style="top:601.2px;font-size:11px;color:#262626;font-weight:700;letter-spacing:-0.413px;left:372.6px;">Tên shop</div>
<div class="a" style="left:19.0px;top:615.0px;width:194.0px;height:23.0px;background:#fff;border:1px solid #c2c6cc;border-radius:2px;box-sizing:border-box"></div>
<div class="a" style="left:220.0px;top:615.0px;width:145.0px;height:23.0px;background:#fff;border:1px solid #c2c6cc;border-radius:2px;box-sizing:border-box"></div>
<div style="position:absolute;left:348.3px;top:624.0px;width:0;height:0;border-left:4.5px solid transparent;border-right:4.5px solid transparent;border-top:5px solid #3a3a3a"></div>
<div class="a" style="left:372.0px;top:615.0px;width:97.0px;height:23.0px;background:#fff;border:1px solid #c2c6cc;border-radius:2px;box-sizing:border-box"></div>
<div style="position:absolute;left:452.7px;top:624.0px;width:0;height:0;border-left:4.5px solid transparent;border-right:4.5px solid transparent;border-top:5px solid #3a3a3a"></div>
<div class="t" style="top:645.9px;font-size:11px;color:#262626;font-weight:700;letter-spacing:-0.188px;left:19.2px;">Mã cửa hàng</div>
<div class="t" style="top:645.9px;font-size:11px;color:#262626;font-weight:700;letter-spacing:-0.287px;left:166.0px;">Tên cửa hàng</div>
<div class="a" style="left:19.0px;top:660.0px;width:140.0px;height:24.0px;background:#fff;border:1px solid #c2c6cc;border-radius:2px;box-sizing:border-box"></div>
<div class="a" style="left:166.0px;top:660.0px;width:303.0px;height:24.0px;background:#fff;border:1px solid #c2c6cc;border-radius:2px;box-sizing:border-box"></div>
<div class="t" style="top:691.6px;font-size:11px;color:#262626;font-weight:700;letter-spacing:-0.227px;left:19.2px;">Địa điểm giao hàng</div>
<div class="a" style="left:19.0px;top:706.0px;width:450.0px;height:23.0px;background:#fff;border:1px solid #c2c6cc;border-radius:2px;box-sizing:border-box"></div>
<div class="t" style="top:711.8px;font-size:12px;color:#2b2b2b;letter-spacing:0.046px;left:29.4px;">Số 6, Kẻ Vẽ, Phường Đông Ngạc, Quận Bắc Từ Liêm, Thành Phố Hà Nội</div>
<div style="position:absolute;left:452.7px;top:715.0px;width:0;height:0;border-left:4.5px solid transparent;border-right:4.5px solid transparent;border-top:5px solid #3a3a3a"></div>
<div class="t" style="top:736.5px;font-size:11px;color:#262626;font-weight:700;letter-spacing:-0.173px;left:19.2px;">Điều khoản khác</div>
<div class="a" style="left:19.0px;top:751.0px;width:450.0px;height:50.0px;background:#fff;border:1px solid #c2c6cc;border-radius:2px;box-sizing:border-box"></div>
<div class="t" style="top:810.0px;font-size:11px;color:#262626;font-weight:700;letter-spacing:-0.134px;left:19.2px;">Mã tra cứu HĐĐT</div>
<div class="t" style="top:810.0px;font-size:11px;color:#262626;font-weight:700;letter-spacing:-0.256px;left:166.0px;">Đường dẫn tra cứu HĐĐT</div>
<div class="a" style="left:19.0px;top:823.0px;width:140.0px;height:24.0px;background:#eeeff1;border:1px solid #c2c6cc;border-radius:2px;box-sizing:border-box"></div>
<div class="a" style="left:166.0px;top:823.0px;width:303.0px;height:24.0px;background:#eeeff1;border:1px solid #c2c6cc;border-radius:2px;box-sizing:border-box"></div>
<div class="a" style="left:1555.0px;top:59.0px;width:11.0px;height:816.0px;background:#f1f1f1"></div>
<div class="a" style="left:1556.5px;top:62.5px;width:0;height:0;border-left:4px solid transparent;border-right:4px solid transparent;border-bottom:4px solid #8a8a8a"></div>
<div class="a" style="left:1557.0px;top:70.7px;width:6.0px;height:713.5px;background:#8a8a8a;border-radius:3px"></div>
<div style="position:absolute;left:1556.5px;top:867.8px;width:0;height:0;border-left:4.0px solid transparent;border-right:4.0px solid transparent;border-top:4px solid #8a8a8a"></div>
<div class="a" style="left:1.0px;top:875.0px;width:1565.0px;height:9.0px;background:#f1f1f1"></div>
<div class="a" style="left:13.2px;top:877.0px;width:1059.0px;height:6.0px;background:#8a8a8a;border-radius:3px"></div>
<div class="a" style="left:3.8px;top:876.5px;width:0;height:0;border-top:3.5px solid transparent;border-bottom:3.5px solid transparent;border-right:4px solid #8a8a8a"></div>
<div class="a" style="left:1549px;top:876.5px;width:0;height:0;border-top:3.5px solid transparent;border-bottom:3.5px solid transparent;border-left:4px solid #8a8a8a"></div>
<div class="a" style="left:1548.0px;top:416.4px;width:18.0px;height:58.0px;background:#2a7fe3;border-radius:5px 0 0 5px;box-shadow:-2px 1px 4px rgba(0,0,0,.25)"></div>
<svg class="a" style="left:1552px;top:440px" width="9" height="10" viewBox="0 0 9 10"><path d="M6 1.5 L2.6 5 L6 8.5" fill="none" stroke="#fff" stroke-width="1.8"/></svg>
<div class="a" style="left:0.0px;top:885.0px;width:1566.0px;height:39.0px;background:#02161b"></div>
<div class="a" style="left:15.0px;top:892.0px;width:54.0px;height:25.0px;border:1.5px solid #8d9c9e;border-radius:3px;box-sizing:border-box"></div>
<div class="t" style="top:896.8px;font-size:12px;color:#fff;font-weight:700;letter-spacing:0.164px;left:-258.0px;width:600px;text-align:center;">Hủy</div>
<div class="a" style="left:714.0px;top:894.0px;width:38.0px;height:19.7px;background:#0e97a8;border-radius:10px"></div>
<div class="a" style="left:734.0px;top:895.8px;width:16.0px;height:16.0px;background:#fff;border-radius:50%"></div>
<div class="t" style="top:896.8px;font-size:12px;color:#e8e8e8;letter-spacing:-0.002px;left:759.0px;">Hiển thị tài khoản</div>
<div class="a" style="left:1388.3px;top:892.4px;width:49.3px;height:24.1px;border:1px solid #9aa5a7;border-radius:3px;box-sizing:border-box"></div>
<div class="t" style="top:896.8px;font-size:12px;color:#fff;font-weight:700;letter-spacing:0.328px;left:1113.0px;width:600px;text-align:center;">Cất</div>
<div class="a" style="left:1447.0px;top:892.0px;width:104.0px;height:24.5px;background:#0b97a8;border-radius:3px"></div>
<div class="t" style="top:896.8px;font-size:12px;color:#fff;font-weight:700;letter-spacing:-0.089px;left:1462.7px;">Cất và In</div>
<div class="a" style="left:1523.0px;top:897.0px;width:1.0px;height:15.0px;background:#fff"></div>
<div style="position:absolute;left:1532.5px;top:902.5px;width:0;height:0;border-left:4.0px solid transparent;border-right:4.0px solid transparent;border-top:5px solid #fff"></div>
<div class="a" style="left:0.0px;top:0.0px;width:1566.0px;height:1.0px;background:#b5b5b5"></div>
<div class="a" style="left:0.0px;top:0.0px;width:1.0px;height:924.0px;background:#b5b5b5"></div>
<div class="a" style="left:0.0px;top:923.0px;width:1566.0px;height:1.0px;background:#b5b5b5"></div>
<div class="a" style="left:1565.0px;top:0.0px;width:1.0px;height:924.0px;background:#c8c8c8"></div>
</body></html>
